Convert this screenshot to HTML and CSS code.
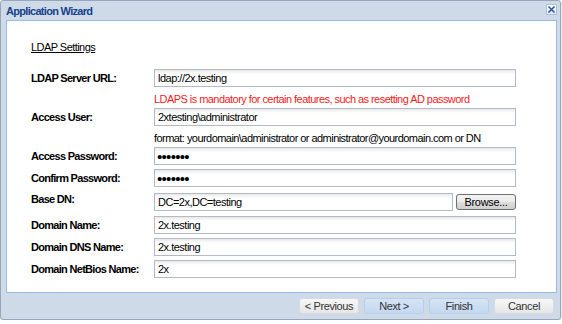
FILE: index.html
```html
<!DOCTYPE html>
<html lang="en">
<head>
    <meta charset="UTF-8">
    <meta name="viewport" content="width=device-width, initial-scale=1.0">
    <title>Application Wizard</title>
    <link rel="stylesheet" href="styles.css">
</head>
<body>
    <div class="window">
        <div class="window-header">
            <span class="window-title">Application Wizard</span>
            <button class="tool-close" title="Close">
                <svg width="9" height="9" viewBox="0 0 9 9">
                    <path d="M1.5 1.5 L7.5 7.5 M7.5 1.5 L1.5 7.5" stroke="#2d5796" stroke-width="1.6" fill="none"/>
                </svg>
            </button>
        </div>

        <div class="window-body">
            <div class="section-title">LDAP Settings</div>

            <div class="form">
                <div class="row">
                    <label class="label" for="server-url">LDAP Server URL:</label>
                    <input class="field" id="server-url" type="text" value="ldap://2x.testing">
                </div>
                <div class="hint hint-error">LDAPS is mandatory for certain features, such as resetting AD password</div>

                <div class="row">
                    <label class="label" for="access-user">Access User:</label>
                    <input class="field" id="access-user" type="text" value="2xtesting\administrator">
                </div>
                <div class="hint">format: yourdomain\administrator or administrator@yourdomain.com or DN</div>

                <div class="row">
                    <label class="label" for="access-password">Access Password:</label>
                    <input class="field field-password" id="access-password" type="password" value="1234567">
                </div>
                <div class="row">
                    <label class="label" for="confirm-password">Confirm Password:</label>
                    <input class="field field-password" id="confirm-password" type="password" value="1234567">
                </div>
                <div class="row row-browse">
                    <label class="label label-top" for="base-dn">Base DN:</label>
                    <input class="field field-short" id="base-dn" type="text" value="DC=2x,DC=testing">
                    <button class="btn-browse">Browse...</button>
                </div>
                <div class="row">
                    <label class="label" for="domain-name">Domain Name:</label>
                    <input class="field" id="domain-name" type="text" value="2x.testing">
                </div>
                <div class="row">
                    <label class="label" for="dns-name">Domain DNS Name:</label>
                    <input class="field" id="dns-name" type="text" value="2x.testing">
                </div>
                <div class="row">
                    <label class="label" for="netbios-name">Domain NetBios Name:</label>
                    <input class="field" id="netbios-name" type="text" value="2x">
                </div>
            </div>
        </div>

        <div class="window-footer">
            <button class="btn">&lt; Previous</button>
            <button class="btn btn-blue">Next &gt;</button>
            <button class="btn btn-blue">Finish</button>
            <button class="btn">Cancel</button>
        </div>
    </div>
</body>
</html>
```

FILE: styles.css
```css
* {
    box-sizing: border-box;
}
body {
    margin: 0;
    background: #fff;
    font-family: "Liberation Sans", Arial, sans-serif;
    font-size: 11px;
    letter-spacing: -0.55px;
    color: #000;
}
.window {
    width: 561px;
    height: 320px;
    border: 1px solid #97a6b9;
    border-radius: 3px;
    background: #cedae7;
    box-shadow: 1px 1px 2px rgba(0, 0, 0, 0.12);
    display: flex;
    flex-direction: column;
}
.window-header {
    height: 19px;
    display: flex;
    align-items: center;
    justify-content: space-between;
    padding: 0 3px 0 5px;
}
.window-title {
    font-weight: bold;
    color: #15428b;
    letter-spacing: -0.7px;
}
.tool-close {
    width: 11px;
    height: 11px;
    padding: 0;
    margin-top: -2px;
    border: 1px solid #a9bfdb;
    background: linear-gradient(#ffffff, #dfe8f3);
    display: flex;
    align-items: center;
    justify-content: center;
}
.window-body {
    height: 273px;
    margin: 0 3px 0 5px;
    padding: 20px 0 0 24px;
    background: #fff;
    border: 1px solid #99bbe8;
}
.section-title {
    line-height: 13px;
    text-decoration: underline;
    margin-bottom: 15px;
}
.form {
    display: flex;
    flex-direction: column;
}
.row {
    display: flex;
    align-items: center;
    margin-top: 4px;
}
.row:first-child,
.hint + .row {
    margin-top: 0;
}
.row-browse {
    margin-top: 6px;
    margin-bottom: 1px;
}
.label {
    width: 123px;
    flex: none;
    font-weight: bold;
    letter-spacing: -0.7px;
    line-height: 13px;
}
.label-top {
    align-self: flex-start;
}
.field {
    width: 362px;
    height: 18px;
    padding: 0 3px;
    border: 1px solid #b5b8c8;
    background: #fff linear-gradient(#e8e8e8, #fff 4px);
    font: inherit;
    letter-spacing: -0.5px;
    color: #000;
    outline: none;
}
.field-password {
    font-size: 15px;
    letter-spacing: -0.7px;
    padding-left: 2px;
}
.field-short {
    width: 299px;
    margin-right: 3px;
}
.btn-browse {
    width: 60px;
    height: 16px;
    padding: 0;
    border: 1px solid #707070;
    border-radius: 3px;
    background: linear-gradient(#f2f2f2, #ebebeb 50%, #dddddd 51%, #cfcfcf);
    font: inherit;
    letter-spacing: -0.3px;
    color: #000;
}
.hint {
    height: 21px;
    padding: 5px 0 0 123px;
    line-height: 14px;
}
.hint-error {
    color: #f41c1c;
}
.window-footer {
    flex: 1;
    display: flex;
    justify-content: flex-end;
    gap: 5px;
    padding: 5px 6px 0 0;
}
.btn {
    width: 60px;
    height: 16px;
    padding: 0;
    border: 1px solid #d6dbe2;
    border-radius: 3px;
    background: linear-gradient(#f7f7f7, #e6e6e6);
    font: inherit;
    letter-spacing: -0.4px;
    color: #333;
}
.btn-blue {
    border-color: #b7cde8;
    background: linear-gradient(#d5e4f6, #c3d8f1);
}
```
